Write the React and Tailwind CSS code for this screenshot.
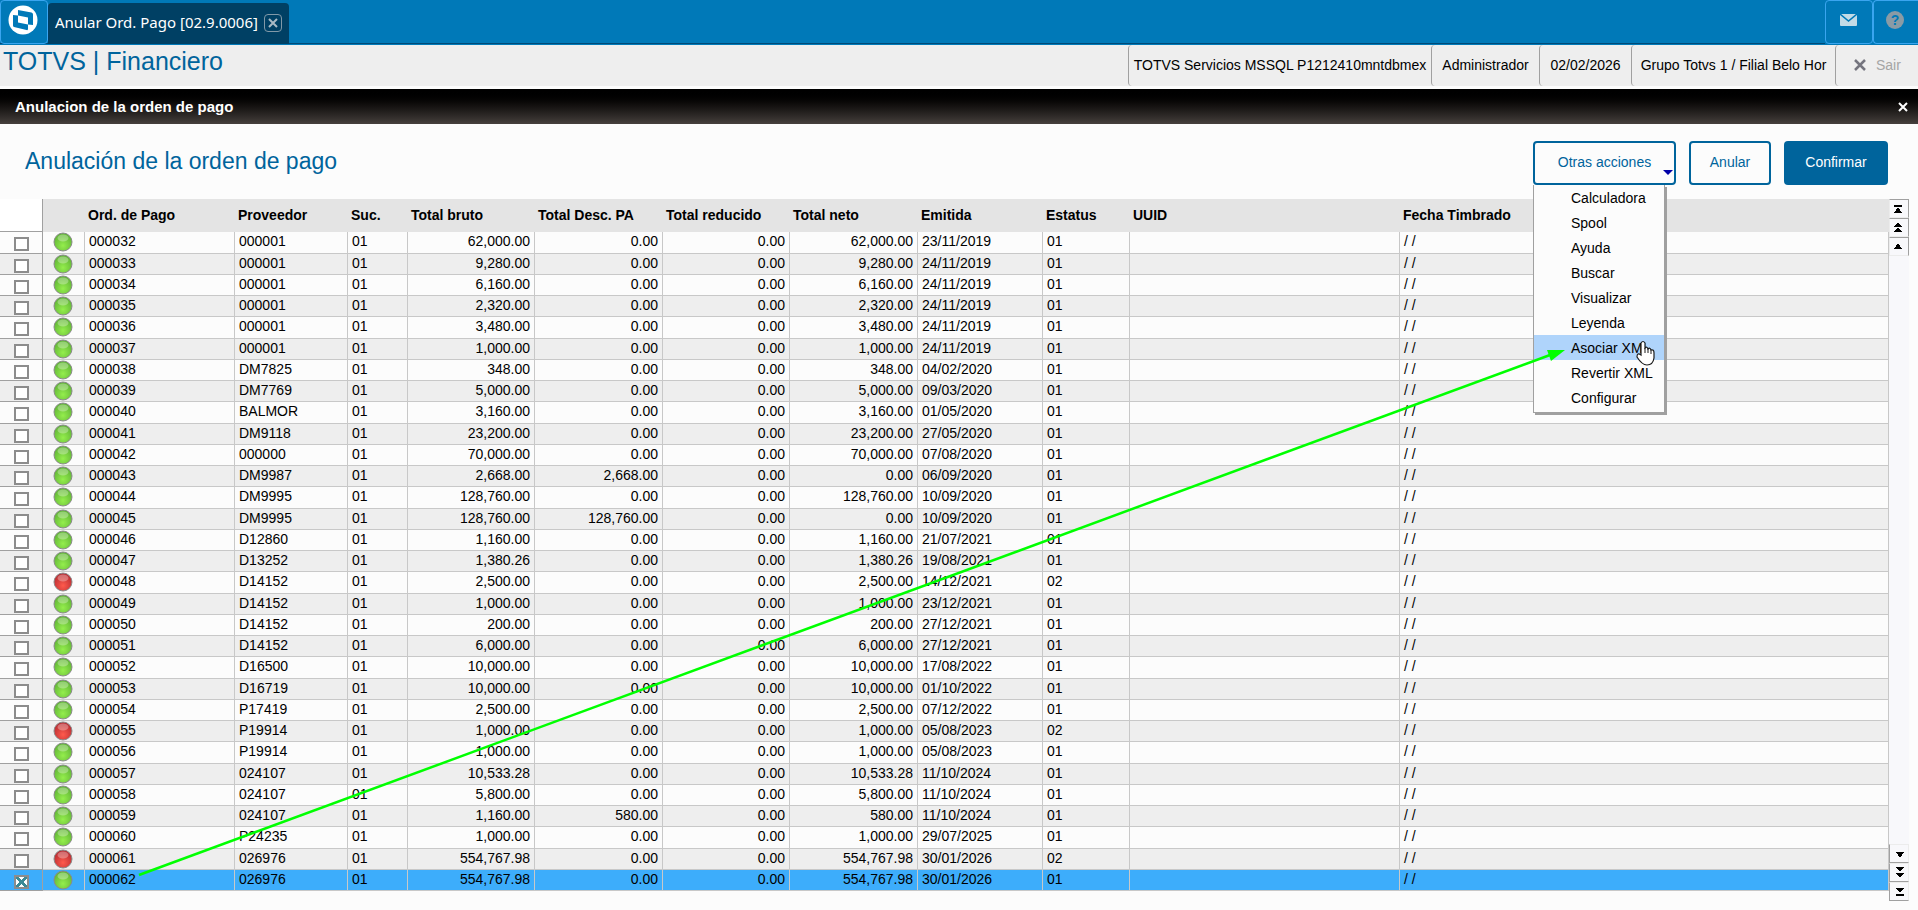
import { useState } from "react";

const FONT = "font-['Liberation_Sans',Arial,sans-serif]";

const COLUMNS = [
  { key: "orden", label: "Ord. de Pago", width: "w-[150px]" },
  { key: "proveedor", label: "Proveedor", width: "w-[113px]" },
  { key: "suc", label: "Suc.", width: "w-[60px]" },
  { key: "bruto", label: "Total bruto", width: "w-[127px]", right: true },
  { key: "desc", label: "Total Desc. PA", width: "w-[128px]", right: true },
  { key: "reducido", label: "Total reducido", width: "w-[127px]", right: true },
  { key: "neto", label: "Total neto", width: "w-[128px]", right: true },
  { key: "emitida", label: "Emitida", width: "w-[125px]" },
  { key: "estatus", label: "Estatus", width: "w-[87px]" },
  { key: "uuid", label: "UUID", width: "w-[270px]" },
  { key: "timbrado", label: "Fecha Timbrado", width: "" },
];

// orden, proveedor, bruto, desc. PA, neto, emitida, estatus
const DATA = [
  ["000032", "000001", "62,000.00", "0.00", "62,000.00", "23/11/2019", "01"],
  ["000033", "000001", "9,280.00", "0.00", "9,280.00", "24/11/2019", "01"],
  ["000034", "000001", "6,160.00", "0.00", "6,160.00", "24/11/2019", "01"],
  ["000035", "000001", "2,320.00", "0.00", "2,320.00", "24/11/2019", "01"],
  ["000036", "000001", "3,480.00", "0.00", "3,480.00", "24/11/2019", "01"],
  ["000037", "000001", "1,000.00", "0.00", "1,000.00", "24/11/2019", "01"],
  ["000038", "DM7825", "348.00", "0.00", "348.00", "04/02/2020", "01"],
  ["000039", "DM7769", "5,000.00", "0.00", "5,000.00", "09/03/2020", "01"],
  ["000040", "BALMOR", "3,160.00", "0.00", "3,160.00", "01/05/2020", "01"],
  ["000041", "DM9118", "23,200.00", "0.00", "23,200.00", "27/05/2020", "01"],
  ["000042", "000000", "70,000.00", "0.00", "70,000.00", "07/08/2020", "01"],
  ["000043", "DM9987", "2,668.00", "2,668.00", "0.00", "06/09/2020", "01"],
  ["000044", "DM9995", "128,760.00", "0.00", "128,760.00", "10/09/2020", "01"],
  ["000045", "DM9995", "128,760.00", "128,760.00", "0.00", "10/09/2020", "01"],
  ["000046", "D12860", "1,160.00", "0.00", "1,160.00", "21/07/2021", "01"],
  ["000047", "D13252", "1,380.26", "0.00", "1,380.26", "19/08/2021", "01"],
  ["000048", "D14152", "2,500.00", "0.00", "2,500.00", "14/12/2021", "02"],
  ["000049", "D14152", "1,000.00", "0.00", "1,000.00", "23/12/2021", "01"],
  ["000050", "D14152", "200.00", "0.00", "200.00", "27/12/2021", "01"],
  ["000051", "D14152", "6,000.00", "0.00", "6,000.00", "27/12/2021", "01"],
  ["000052", "D16500", "10,000.00", "0.00", "10,000.00", "17/08/2022", "01"],
  ["000053", "D16719", "10,000.00", "0.00", "10,000.00", "01/10/2022", "01"],
  ["000054", "P17419", "2,500.00", "0.00", "2,500.00", "07/12/2022", "01"],
  ["000055", "P19914", "1,000.00", "0.00", "1,000.00", "05/08/2023", "02"],
  ["000056", "P19914", "1,000.00", "0.00", "1,000.00", "05/08/2023", "01"],
  ["000057", "024107", "10,533.28", "0.00", "10,533.28", "11/10/2024", "01"],
  ["000058", "024107", "5,800.00", "0.00", "5,800.00", "11/10/2024", "01"],
  ["000059", "024107", "1,160.00", "580.00", "580.00", "11/10/2024", "01"],
  ["000060", "P24235", "1,000.00", "0.00", "1,000.00", "29/07/2025", "01"],
  ["000061", "026976", "554,767.98", "0.00", "554,767.98", "30/01/2026", "02"],
  ["000062", "026976", "554,767.98", "0.00", "554,767.98", "30/01/2026", "01"],
];

const ROWS = DATA.map(([orden, proveedor, bruto, desc, neto, emitida, estatus]) => ({
  orden,
  proveedor,
  suc: "01",
  bruto,
  desc,
  reducido: "0.00",
  neto,
  emitida,
  estatus,
  uuid: "",
  timbrado: "/ /",
}));

const MENU = [
  "Calculadora",
  "Spool",
  "Ayuda",
  "Buscar",
  "Visualizar",
  "Leyenda",
  "Asociar XML",
  "Revertir XML",
  "Configurar",
];

function Logo() {
  return (
    <svg viewBox="0 0 30 30" className="h-[30px] w-[30px]" aria-hidden="true">
      <circle cx="15" cy="15" r="14.5" fill="#fff" />
      <path
        fill="#0079b8"
        d="M10 5 L23.5 7.5 Q25 8 25 9.5 V20 L20 19.5 V24 Q20 25.500 18.500 25 L6 22 Q5 21.500 5 20.500 V10 L10 10.5 Z"
      />
      <path fill="#fff" d="M10 10.500 L20 12.500 V19.500 L10 17.500 Z" />
    </svg>
  );
}

function Light({ red }) {
  return (
    <svg viewBox="0 0 20 20" className="ml-[10px] block h-5 w-5" aria-hidden="true">
      <circle cx="10" cy="10" r="9" fill={red ? "url(#luzRoja)" : "url(#luzVerde)"} stroke="#8a8a8a" />
      <ellipse cx="10" cy="6" rx="5.5" ry="3.5" fill="#fff" opacity="0.3" />
    </svg>
  );
}

function TopBar() {
  return (
    <header className="flex h-[45px] items-start justify-between border-b border-[#0079b8] bg-[#0079b8]">
      <div className="flex h-11 flex-1 border-b border-[#004a77]">
        <button aria-label="Inicio" className="flex h-11 w-12 items-start justify-center rounded border border-[#3aa5ef] pt-1 pr-[2px]">
          <Logo />
        </button>
        <div className="mt-[3px] flex h-[41px] items-center gap-[6px] rounded-t bg-[#004064] pr-[7px] pb-[2px] pl-[7px]">
          <span className="font-['Noto_Sans',sans-serif] text-[15px] text-white">Anular Ord. Pago [02.9.0006]</span>
          <button aria-label="Cerrar" className="h-[18px] w-[18px] rounded border border-[#8199a8]">
            <svg viewBox="0 0 16 16" className="h-4 w-4" stroke="#a9bac5" strokeWidth="2">
              <path d="M4 4 L12 12 M12 4 L4 12" />
            </svg>
          </button>
        </div>
      </div>
      <button aria-label="Mensajes" className="flex h-11 w-12 items-center justify-center rounded border border-[#3aa5ef] pr-[2px]">
        <svg viewBox="0 0 17 12" className="mb-1 h-3 w-[17px]">
          <rect width="17" height="12" rx="1" fill="#c3dbe6" />
          <path d="M0 0 L8.5 7 L17 0" fill="none" stroke="#0079b8" strokeWidth="1.5" />
        </svg>
      </button>
      <button aria-label="Ayuda" className="flex h-11 w-[45px] items-center justify-center rounded-l border border-r-0 border-[#3aa5ef] pr-[2px]">
        <span className="mb-1 flex h-[18px] w-[18px] items-center justify-center rounded-full bg-[#8a9ba5] text-sm font-bold text-[#0079b8]">?</span>
      </button>
    </header>
  );
}

const INFO = [
  { text: "TOTVS Servicios MSSQL P1212410mntdbmex", width: "w-[303px]" },
  { text: "Administrador", width: "w-[108px]" },
  { text: "02/02/2026", width: "w-[92px]" },
  { text: "Grupo Totvs 1 / Filial Belo Hor", width: "w-[204px]" },
];

function InfoBar() {
  return (
    <div className="flex h-[41px] justify-between bg-[#eeeeee] text-sm text-black">
      <h1 className="pl-[3px] text-[25px] leading-8 text-[#00649c]">TOTVS | Financiero</h1>
      <div className="flex">
        {INFO.map((info) => (
          <span
            key={info.text}
            className={`${info.width} flex items-center justify-center rounded-l border-l border-[#a0a0a0] pb-[2px] whitespace-nowrap`}
          >
            {info.text}
          </span>
        ))}
        <button className="flex w-[83px] items-center gap-[10px] rounded-l border-l border-[#a0a0a0] pb-[2px] pl-[18px] text-[#a5a5a5]">
          <svg viewBox="0 0 12 12" className="h-3 w-3" stroke="#74747e" strokeWidth="2.5">
            <path d="M1 1 L11 11 M11 1 L1 11" />
          </svg>
          Sair
        </button>
      </div>
    </div>
  );
}

function ActionsMenu() {
  return (
    <ul className="absolute top-[44px] left-0 z-10 w-[132px] border border-t-0 border-[#a0a0a0] bg-[#fcfcfc] pb-[2px] shadow-[2px_2px_0_#a0a0a0]">
      {MENU.map((item) => (
        <li key={item}>
          <button
            className={`block h-[25px] w-full pl-[37px] text-left text-sm whitespace-nowrap text-black ${
              item === "Asociar XML" ? "bg-[#afd4fb]" : ""
            }`}
          >
            {item}
          </button>
        </li>
      ))}
    </ul>
  );
}

function ScrollButton({ label, d, down }) {
  return (
    <button
      aria-label={label}
      className={`block h-[19px] w-5 border bg-[#f8f8fb] ${
        down
          ? "border-t-[#ececec] border-r-[#ececec] border-b-[#a0a0a0] border-l-[#a0a0a0]"
          : "border-t-[#a0a0a0] border-r-[#a0a0a0] border-b-[#ececec] border-l-[#ececec]"
      }`}
    >
      <svg viewBox="0 0 18 17" className="h-[17px] w-[18px]" shapeRendering="crispEdges">
        <path d={d} fill="#000" />
      </svg>
    </button>
  );
}

function Grid() {
  const [checked, setChecked] = useState({ "000062": true });

  return (
    <table className="w-full table-fixed border-separate border-spacing-0 text-sm leading-[18px] text-black">
      <thead>
        <tr className="h-[33px] bg-[#e4e4e4] text-left">
          <th className="w-[43px] border-r border-b border-[#a0a0a0] bg-white p-0" aria-label="Marcar" />
          <th className="w-[42px] p-0" aria-label="Leyenda" />
          {COLUMNS.map((c) => (
            <th key={c.key} className={`${c.width} p-0 pb-[2px] pl-[3px] font-bold whitespace-nowrap`}>
              {c.label}
            </th>
          ))}
        </tr>
      </thead>
      <tbody>
        {ROWS.map((row) => {
          const on = !!checked[row.orden];
          return (
            <tr
              key={row.orden}
              className={`h-[21px] nth-[4n+1]:h-[22px] ${on ? "bg-[#3dadfb]" : "bg-[#fcfcfc] even:bg-[#eeeeee]"}`}
            >
              <td className="border-r border-b border-[#a0a0a0] p-0 align-top">
                <input
                  type="checkbox"
                  aria-label={`Marcar ${row.orden}`}
                  checked={on}
                  onChange={() => setChecked({ ...checked, [row.orden]: !on })}
                  className="mt-[5px] ml-[14px] block h-[14px] w-[15px] appearance-none border-2 border-[#8c8c8c] bg-white checked:bg-[linear-gradient(45deg,transparent_40%,#3c8a96_40%,#3c8a96_60%,transparent_60%),linear-gradient(135deg,transparent_40%,#3c8a96_40%,#3c8a96_60%,transparent_60%)]"
                />
              </td>
              <td className="border-r border-b border-[#c8c8c8] p-0 align-top">
                <Light red={row.estatus === "02"} />
              </td>
              {COLUMNS.map((c) => (
                <td
                  key={c.key}
                  className={`border-r border-b border-[#c8c8c8] p-0 align-top ${c.right ? "pr-1 text-right" : "pl-1"}`}
                >
                  {row[c.key]}
                </td>
              ))}
            </tr>
          );
        })}
      </tbody>
    </table>
  );
}

export default function App() {
  return (
    <div className={`relative min-h-screen bg-[#fcfcfc] ${FONT}`}>
      <TopBar />
      <InfoBar />
      <div className="mt-[3px] flex h-[35px] items-center justify-between bg-linear-to-b from-black to-[#46403d] pr-[10px] pl-[15px] text-white">
        <h2 className="pt-[2px] text-[15px] font-bold">Anulacion de la orden de pago</h2>
        <button aria-label="Cerrar ventana">
          <svg viewBox="0 0 10 10" className="h-[10px] w-[10px]" stroke="#fff" strokeWidth="2">
            <path d="M1 1 L9 9 M9 1 L1 9" />
          </svg>
        </button>
      </div>

      <div className="flex h-[75px] items-start justify-between pt-[17px] pr-[30px] pl-[25px]">
        <h3 className="text-[23px] leading-10 text-[#00649c]">Anulación de la orden de pago</h3>
        <div className="flex gap-[13px] text-sm">
          <div className="relative">
            <button className="h-11 w-[143px] rounded border-2 border-[#00649c] pb-[2px] text-[#00649c]">Otras acciones</button>
            <svg viewBox="0 0 10 5" className="absolute right-[3px] bottom-[10px] h-[5px] w-[10px]">
              <path d="M0 0 H10 L5 5 Z" fill="#0000a8" />
            </svg>
            <ActionsMenu />
          </div>
          <button className="h-11 w-[82px] rounded border-2 border-[#00649c] pb-[2px] text-[#00649c]">Anular</button>
          <button className="h-11 w-[104px] rounded bg-[#00649c] pb-[2px] text-white">Confirmar</button>
        </div>
      </div>

      <main className="flex pr-[9px]">
        <div className="flex-1">
          <Grid />
        </div>
        <div className="-mb-[10px] flex w-5 flex-col justify-between bg-[#f8f8fb]">
          <div>
            <ScrollButton label="Primero" d="M4 5 H12 V7 H4 Z M8 7 L12 13 H4 Z" />
            <ScrollButton label="Página anterior" d="M8 3 L12 8 H4 Z M8 8 L12 13 H4 Z" />
            <ScrollButton label="Anterior" d="M8 5 L12 11 H4 Z" />
          </div>
          <div>
            <ScrollButton down label="Siguiente" d="M6 7 H14 L10 13 Z" />
            <ScrollButton down label="Página siguiente" d="M6 3 H14 L10 8 Z M6 9 H14 L10 14 Z" />
            <ScrollButton down label="Último" d="M6 5 H14 L10 10 Z M6 11 H14 V13 H6 Z" />
          </div>
        </div>
      </main>

      <svg viewBox="0 0 1918 910" className="pointer-events-none absolute top-0 left-0 z-20 h-[910px] w-[1918px]" aria-hidden="true">
        <defs>
          <radialGradient id="luzVerde" cx="0.5" cy="0.7" r="0.7">
            <stop offset="0" stopColor="#94ee4c" />
            <stop offset="1" stopColor="#5cae35" />
          </radialGradient>
          <radialGradient id="luzRoja" cx="0.5" cy="0.7" r="0.7">
            <stop offset="0" stopColor="#ff5a4c" />
            <stop offset="1" stopColor="#b02830" />
          </radialGradient>
        </defs>
        <path d="M139 875 L1550 355" stroke="#00ff00" strokeWidth="2.5" />
        <path d="M1565 350 L1547 350 L1551 361 Z" fill="#00ff00" />
        <path
          d="M1641 355 V343 Q1643 340 1645 343 V348 Q1647 346 1648 349 Q1650 347 1651 350 Q1654 349 1654 353 V358 Q1653 365 1647 365 Q1642 365 1637 357 Q1637 352 1641 355 Z"
          fill="#fff"
          stroke="#1a1a1a"
          strokeWidth="1.2"
        />
        <path d="M1645 348 V353 M1648 349 V353 M1651 350 V354" stroke="#1a1a1a" strokeWidth="1" />
      </svg>
    </div>
  );
}
